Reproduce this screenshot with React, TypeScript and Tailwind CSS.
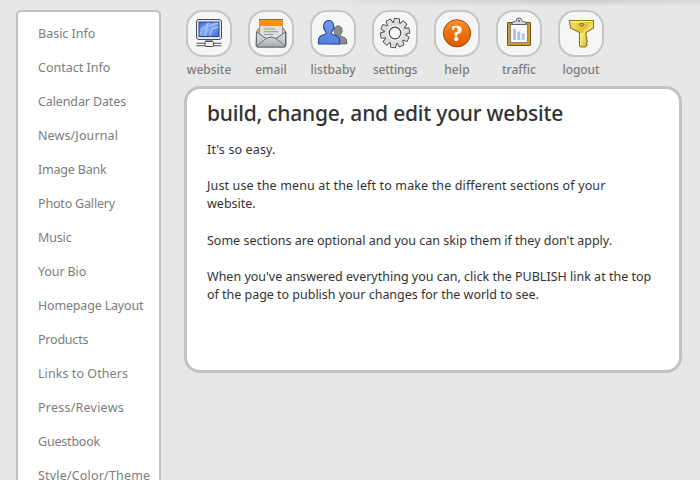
import type { ReactNode } from "react";

const menu: [string, string][] = [
  ["Basic Info", "tracking-[0px]"],
  ["Contact Info", "tracking-[0px]"],
  ["Calendar Dates", "tracking-[-0.12px]"],
  ["News/Journal", "tracking-[0.12px]"],
  ["Image Bank", "tracking-[-0.2px]"],
  ["Photo Gallery", "tracking-[-0.18px]"],
  ["Music", "tracking-[-0.15px]"],
  ["Your Bio", "tracking-[-0.12px]"],
  ["Homepage Layout", "tracking-[-0.18px]"],
  ["Products", "tracking-[-0.22px]"],
  ["Links to Others", "tracking-[0.07px]"],
  ["Press/Reviews", "tracking-[0.23px]"],
  ["Guestbook", "tracking-[-0.2px]"],
  ["Style/Color/Theme", "tracking-[0.18px]"],
];

function Icon({ children }: { children: ReactNode }) {
  return (
    <svg viewBox="0 0 46 46" className="block size-full">
      {children}
    </svg>
  );
}

const Website = () => (
  <Icon>
    <defs>
      <linearGradient id="screen" x1="0" y1="0" x2="1" y2="1">
        <stop offset="0" stopColor="#3c69d6" />
        <stop offset="0.5" stopColor="#86a8f0" />
        <stop offset="1" stopColor="#3a66d6" />
      </linearGradient>
    </defs>
    <rect x="10.5" y="9.500" width="25" height="20" rx="2.500" fill="#e8e9ea" stroke="#4a4c4f" />
    <rect x="13" y="12" width="20" height="14.500" fill="url(#screen)" stroke="#2446a5" />
    <path d="M14 24 C18 17 24 15 32 13 M14 20 L23 13 M19 26 L22 13 M24 26 L26 19 L32 17" stroke="#c4d5fb" strokeWidth="0.9" fill="none" />
    <path d="M20 30h6v3h-6z" fill="#d5d6d7" stroke="#5b5d5f" strokeWidth="0.8" />
    <path d="M10.500 33.200h25M10.500 35.700h25" stroke="#515355" strokeWidth="1.100" />
    <rect x="19" y="31.500" width="8.500" height="5" rx="1" fill="#eeefef" stroke="#4a4c4f" />
  </Icon>
);

const Email = () => (
  <Icon>
    <defs>
      <linearGradient id="envelope" x1="0" y1="0" x2="0" y2="1">
        <stop offset="0" stopColor="#e3e4e5" />
        <stop offset="1" stopColor="#aaadb0" />
      </linearGradient>
    </defs>
    <path d="M8.500 22 L12 17H34l4 5v13.500a1.500 1.500 0 0 1-1.500 1.500h-27a1.500 1.500 0 0 1-1.500-1.500z" fill="#c5c7c8" stroke="#66696b" />
    <path d="M11.500 9.500H34.500V25L23 31 11.500 25z" fill="#dfe0e1" stroke="#96999b" />
    <path d="M11.500 10H34.500V16H11.500z" fill="#ff9200" />
    <path d="M11 9.500H35" stroke="#77706a" />
    <path d="M16 19h11M16 21.700h14M16 24.400h9" stroke="#8d9092" strokeWidth="0.900" />
    <path d="M8.500 22 L18 28.500 Q23 25.500 28 28.500 L37.500 22V35.500a1.500 1.500 0 0 1-1.500 1.500h-26a1.500 1.500 0 0 1-1.500-1.500z" fill="url(#envelope)" stroke="#66696b" />
    <path d="M9 36 L18 28.500 M37 36 L28 28.500" stroke="#737678" fill="none" />
  </Icon>
);

const PERSON = "M8.500 34v-4c0-3 2-4.500 6-5.500 2-.5 2-2 .8-3.300-3-3.200-2-10.700 3.400-10.700s6.400 7.500 3.400 10.700c-1.200 1.300-1.200 2.800.8 3.300 4 1 6.800 2.500 6.800 5.500v4z";
const Listbaby = () => (
  <Icon>
    <defs>
      <linearGradient id="member" x1="0" y1="0" x2="0" y2="1">
        <stop offset="0" stopColor="#7299e8" />
        <stop offset="1" stopColor="#5580dc" />
      </linearGradient>
    </defs>
    <path d={PERSON} transform="translate(13.500 8) scale(.78 .76)" fill="#8b8d8f" stroke="#55585a" strokeWidth="1.200" />
    <path d={PERSON} fill="url(#member)" stroke="#264897" strokeWidth="1.100" />
  </Icon>
);

const TEETH = [0, 36, 72, 108, 144, 180, 216, 252, 288, 324];
const Settings = () => (
  <Icon>
    <g fill="#d8dadb" stroke="#4b4d4f" strokeWidth="1">
      {TEETH.map((a) => (
        <path key={a} d="M19.800 13.500L20.600 8.500h4.800L26.200 13.500z" transform={`rotate(${a + 8} 23 23)`} />
      ))}
      <circle cx="23" cy="23" r="10.900" />
    </g>
    <circle cx="23" cy="23" r="10.400" fill="#dcddde" />
    {TEETH.map((a) => (
      <path key={a} d="M20.400 14L21.100 9h3.800L25.600 14z" transform={`rotate(${a + 8} 23 23)`} fill="#dcddde" />
    ))}
    <circle cx="23" cy="23" r="7.200" fill="none" stroke="#f4f4f4" strokeWidth="1.500" />
    <circle cx="23" cy="23" r="5.800" fill="#f5f6f6" stroke="#4b4d4f" strokeWidth="1.200" />
  </Icon>
);

const Help = () => (
  <Icon>
    <defs>
      <linearGradient id="ball" x1="0" y1="0" x2="0" y2="1">
        <stop offset="0" stopColor="#f49336" />
        <stop offset="0.45" stopColor="#ee7410" />
        <stop offset="1" stopColor="#d95900" />
      </linearGradient>
    </defs>
    <circle cx="23" cy="23.300" r="13.600" fill="url(#ball)" stroke="#a5440b" strokeWidth="1" />
    <text x="23" y="30.700" textAnchor="middle" fill="#fff8ea" stroke="#fff8ea" strokeWidth="0.400" className="font-['Liberation_Serif',serif] text-[23px] font-bold">?</text>
  </Icon>
);

const Traffic = () => (
  <Icon>
    <rect x="11.500" y="12.500" width="23" height="23" rx="0.500" fill="#c99a31" stroke="#75551a" />
    <rect x="14.500" y="14.500" width="17" height="18" fill="#fbfbfd" stroke="#777067" strokeWidth="0.800" />
    <path d="M17 19h3v11h-3zM21.200 21.500h3V30h-3zM25.600 23.500h3V30h-3z" fill="#b0c1ee" />
    <path d="M16 14.500v-2c1-1 3.500-.5 4-1.500a3 3 0 0 1 6 0c.5 1 3 .5 4 1.500v2z" fill="#d6d8d9" stroke="#55585a" strokeWidth="0.900" />
    <circle cx="23" cy="11" r="1" fill="#55585a" />
  </Icon>
);

const Logout = () => (
  <Icon>
    <defs>
      <linearGradient id="key" x1="0" y1="0" x2="1" y2="1">
        <stop offset="0" stopColor="#f8e46b" />
        <stop offset="0.450" stopColor="#e3c132" />
        <stop offset="0.550" stopColor="#f6e36e" />
        <stop offset="1" stopColor="#d0a91e" />
      </linearGradient>
    </defs>
    <path d="M11.500 10.500h24v7.500l-7.500 4.500v4l1.200 1.500-1 1.500 1.300 1.500-1.300 2 1 1.500-1.700 2.500h-4.500l-1.500-1.500V22.500l-9-4.500z" fill="url(#key)" stroke="#8f7412" strokeWidth="1.100" />
    <path d="M12.500 11.600h22" stroke="#fff3a0" />
    <path d="M23 23v12.500" stroke="#fbf0a0" strokeWidth="1.200" />
    <ellipse cx="23.500" cy="14.700" rx="2.200" ry="1.200" fill="#c9bd80" stroke="#7d640f" />
  </Icon>
);

const tools: [string, () => ReactNode, string][] = [
  ["website", Website, "tracking-[0px]"],
  ["email", Email, "tracking-[0px]"],
  ["listbaby", Listbaby, "tracking-[0.05px]"],
  ["settings", Settings, "tracking-[-0.25px]"],
  ["help", Help, "tracking-[0.1px]"],
  ["traffic", Traffic, "tracking-[0px]"],
  ["logout", Logout, "tracking-[-0.1px]"],
];

export default function App() {
  return (
    <div className="flex h-[480px] w-[700px] overflow-hidden bg-[#e7e7e7] bg-[radial-gradient(280px_7px_at_570px_0px,#cdcdcd,#e7e7e7)] pl-4 font-['Noto_Sans',sans-serif]">
      <nav className="mt-2.5 h-[490px] w-[145px] shrink-0 rounded-t-[5px] border-2 border-[#c1c1c1] bg-white pl-5 pt-[5px]">
        <ul>
          {menu.map(([label, tracking]) => (
            <li key={label} className="flex h-[34px] items-center whitespace-nowrap text-[12.5px] text-[#7d7d7d]">
              <a className={tracking}>{label}</a>
            </li>
          ))}
        </ul>
      </nav>
      <main className="flex w-[522px] flex-col">
        <header className="flex h-[86px] pl-[17px] pt-2.5">
          {tools.map(([label, Glyph, tracking]) => (
            <a key={label} className="flex w-[62px] flex-col items-center">
              <span className="h-[47px] w-[46px] rounded-[17px] border-2 border-[#c5c6c6] bg-[#f5f6f6]">
                <span className="-m-[2px] block size-[46px]"><Glyph /></span>
              </span>
              <span className={`text-[12px] leading-[26px] font-medium text-[#7c7c7c] ${tracking}`}>{label}</span>
            </a>
          ))}
        </header>
        <section className="ml-[23px] h-[287px] w-[498px] rounded-2xl border-3 border-[#c1c2c2] bg-white pl-5 text-[#333]">
          <h1 className="mt-[9px] whitespace-nowrap text-[21px] leading-[30px] font-medium tracking-[-0.22px]">build, change, and edit your website</h1>
          <div className="mt-[13px] whitespace-nowrap text-[12.5px] leading-[18px]">
            <p className="mb-[18px] tracking-[0.14px]">It's so easy.</p>
            <p className="mb-[19px]"><span className="tracking-[0.135px]">Just use the menu at the left to make the different sections of your</span><br /><span>website.</span></p>
            <p className="mb-[18px]">Some sections are optional and you can skip them if they don't apply.</p>
            <p><span>When you've answered everything you can, click the PUBLISH link at the top</span><br /><span className="tracking-[-0.02px]">of the page to publish your changes for the world to see.</span></p>
          </div>
        </section>
      </main>
    </div>
  );
}
